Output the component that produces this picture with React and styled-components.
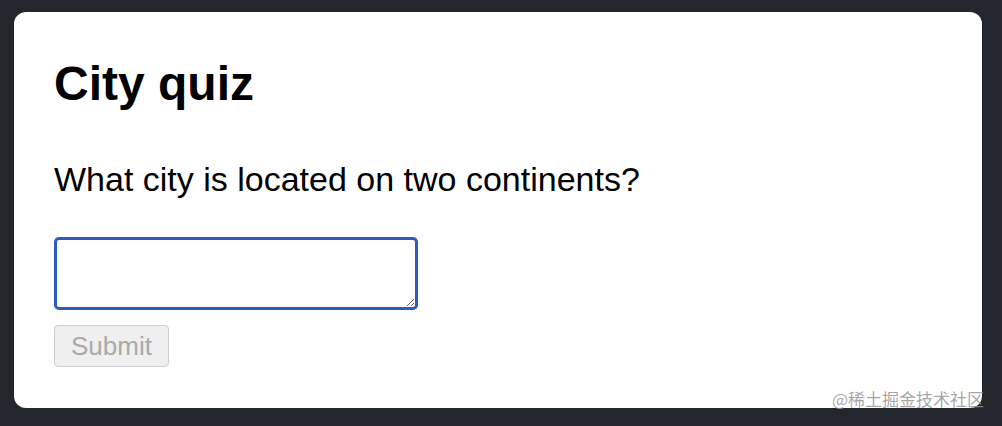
import React from "react";
import styled, { createGlobalStyle } from "styled-components";

const Global = createGlobalStyle`
  html, body { margin: 0; padding: 0; background: #24262d; }
  body { font-family: "Liberation Sans", Arial, sans-serif; }
`;

const Page = styled.div`
  position: relative;
  width: 1002px;
  height: 426px;
  box-sizing: border-box;
  padding: 12px 20px 18px 14px;
  background: #24262d;
`;

const Card = styled.main`
  height: 396px;
  box-sizing: border-box;
  background: #ffffff;
  border-radius: 12px;
  padding: 44px 40px 0 40px;
  display: flex;
  flex-direction: column;
  align-items: flex-start;
`;

const Title = styled.h1`
  margin: 0;
  font-size: 48px;
  line-height: 56px;
  font-weight: 700;
  color: #000;
`;

const Question = styled.p`
  margin: 47px 0 0 0;
  font-size: 34px;
  line-height: 40px;
  color: #000;
`;

const Form = styled.form`
  margin-top: 38px;
  display: flex;
  flex-direction: column;
  align-items: flex-start;
  gap: 15px;
`;

const Answer = styled.textarea`
  width: 364px;
  height: 73px;
  box-sizing: border-box;
  border: 3px solid #2c5cc0;
  border-radius: 5px;
  outline: none;
  padding: 4px 4px;
  font-family: inherit;
  font-size: 22px;
  caret-color: #000;
`;

const Submit = styled.button`
  width: 115px;
  height: 42px;
  box-sizing: border-box;
  background: #efefef;
  border: 1px solid #cfcfcf;
  border-radius: 4px;
  color: #a9a9a9;
  font-family: inherit;
  font-size: 26px;
  padding: 0;
`;

const Watermark = styled.div`
  position: absolute;
  right: 18px;
  bottom: 17px;
  font-family: "Noto Sans CJK SC", sans-serif;
  font-size: 17px;
  line-height: 20px;
  color: rgba(150, 150, 150, 0.85);
`;

export default function App() {
  return (
    <>
      <Global />
      <Page>
        <Card>
          <Title>City quiz</Title>
          <Question>What city is located on two continents?</Question>
          <Form onSubmit={(e) => e.preventDefault()}>
            <Answer autoFocus />
            <Submit type="submit" disabled>Submit</Submit>
          </Form>
        </Card>
        <Watermark>@稀土掘金技术社区</Watermark>
      </Page>
    </>
  );
}
